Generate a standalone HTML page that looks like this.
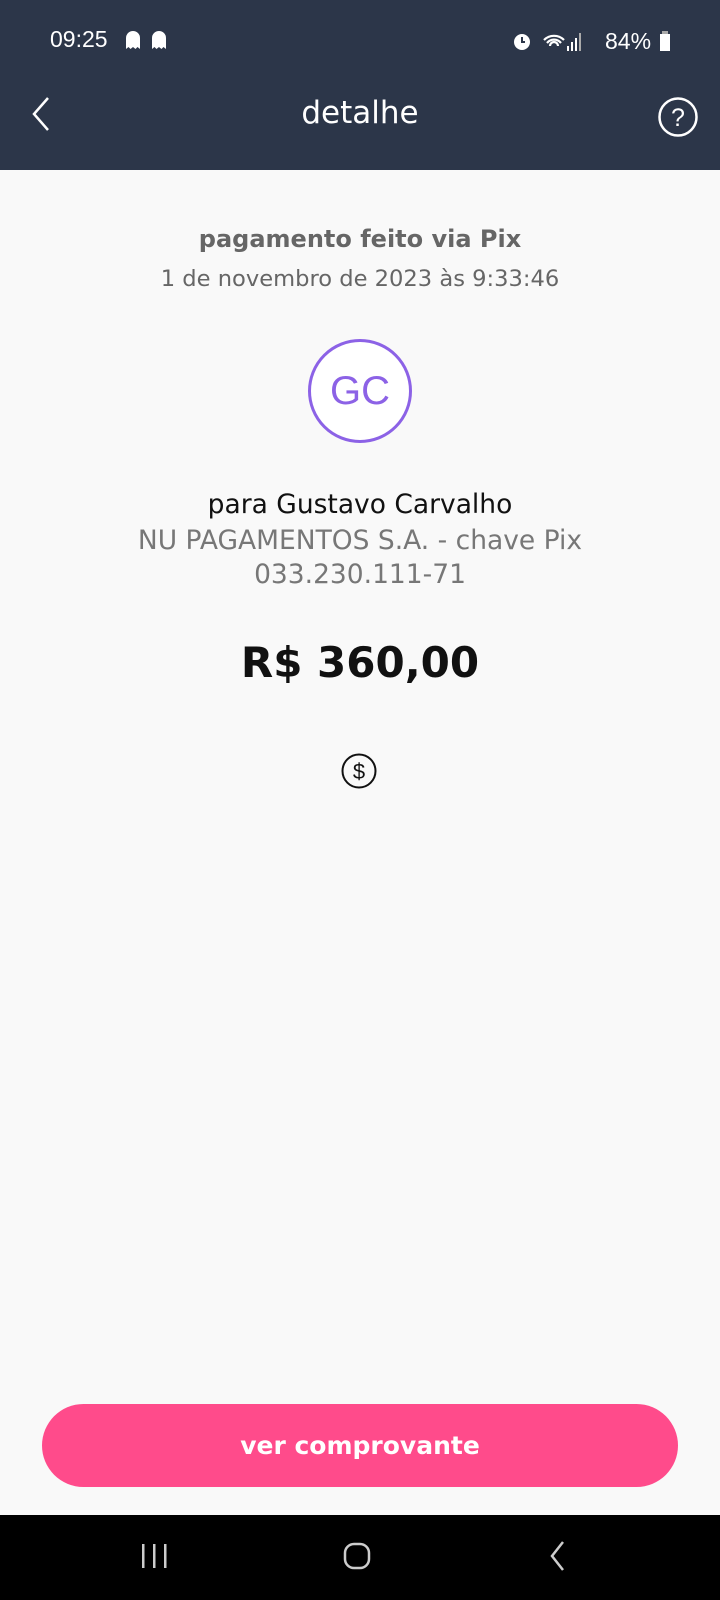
<!DOCTYPE html>
<html><head><meta charset="utf-8"><style>
*{margin:0;padding:0;box-sizing:border-box}
body{width:720px;height:1600px;background:#f9f9f9;font-family:"DejaVu Sans","Liberation Sans",sans-serif;position:relative;overflow:hidden}
.hdr{position:absolute;left:0;top:0;width:720px;height:170px;background:#2c3649;color:#fff}
.abs{position:absolute}
.c{position:absolute;left:0;width:720px;text-align:center;white-space:nowrap}
</style></head><body>
<div class="hdr">
 <div class="abs" style="left:50px;top:26px;font-size:23px;font-family:'Liberation Sans',sans-serif">09:25</div>
 <svg class="abs" style="left:124px;top:29px" width="50" height="24" viewBox="0 0 50 24"><path d="M2 20V9a7 7 0 0 1 14 0v11l-2.5-2-2 2-2.5-2-2.5 2-2-2z" fill="#fff"/><path d="M28 20V9a7 7 0 0 1 14 0v11l-2.5-2-2 2-2.5-2-2.5 2-2-2z" fill="#fff"/></svg>
 <svg class="abs" style="left:510px;top:28px" width="165" height="26" viewBox="0 0 165 26">
  <circle cx="12" cy="14" r="8" fill="#fff"/><path d="M12 9v5h3" stroke="#2c3649" stroke-width="2" fill="none"/>
  <path d="M34 12a14 14 0 0 1 20 0M37 15a9 9 0 0 1 14 0M40 18a4 4 0 0 1 8 0" stroke="#fff" stroke-width="2.2" fill="none"/>
  <rect x="57" y="18" width="2" height="5" fill="#fff"/><rect x="61" y="14" width="2" height="9" fill="#fff"/><rect x="65" y="10" width="2" height="13" fill="#fff"/><rect x="69" y="5" width="2" height="18" fill="#aaa"/>
  <text x="95" y="21" font-size="23" fill="#fff" font-family="Liberation Sans">84%</text>
  <rect x="150" y="6" width="10" height="17" fill="#fff"/><rect x="152" y="3" width="6" height="3" fill="#aaa"/>
 </svg>
 <svg class="abs" style="left:30px;top:96px" width="24" height="36" viewBox="0 0 24 36"><path d="M18 2L4 18l14 16" stroke="#fff" stroke-width="2.5" fill="none"/></svg>
 <div class="c" style="top:95px;font-size:31px">detalhe</div>
 <svg class="abs" style="left:657px;top:96px" width="42" height="42" viewBox="0 0 42 42"><circle cx="21" cy="21" r="18.5" stroke="#fff" stroke-width="2.5" fill="none"/><text x="21" y="30" text-anchor="middle" font-size="25" fill="#fff" font-family="Liberation Sans">?</text></svg>
</div>
<div class="c" style="top:225px;font-size:24px;font-weight:bold;color:#666">pagamento feito via Pix</div>
<div class="c" style="top:266px;font-size:22.6px;color:#666">1 de novembro de 2023 às 9:33:46</div>
<div class="abs" style="left:308px;top:339px;width:104px;height:104px;border:3px solid #8c62e6;border-radius:50%;background:#fff;text-align:center;line-height:98px;font-size:40px;color:#8c62e6;font-family:'Liberation Sans',sans-serif">GC</div>
<div class="c" style="top:489px;font-size:26.5px;color:#111">para Gustavo Carvalho</div>
<div class="c" style="top:525px;font-size:26.5px;color:#777">NU PAGAMENTOS S.A. - chave Pix</div>
<div class="c" style="top:559px;font-size:26.5px;color:#777">033.230.111-71</div>
<div class="c" style="top:638px;font-size:42px;font-weight:bold;color:#111">R$ 360,00</div>
<svg class="abs" style="left:341px;top:753px" width="36" height="36" viewBox="0 0 36 36"><circle cx="18" cy="18" r="16.5" stroke="#111" stroke-width="2" fill="none"/><text x="18" y="26" text-anchor="middle" font-size="22" fill="#111" font-family="Liberation Sans">$</text></svg>
<div class="abs" style="left:42px;top:1404px;width:636px;height:83px;border-radius:42px;background:#ff4b8b;color:#fff;text-align:center;line-height:83px;font-size:25px;font-weight:bold">ver comprovante</div>
<div class="abs" style="left:0;top:1515px;width:720px;height:85px;background:#000">
 <svg class="abs" style="left:140px;top:27px" width="30" height="28"><rect x="2" y="2" width="2.5" height="24" fill="#ccc"/><rect x="13" y="2" width="2.5" height="24" fill="#ccc"/><rect x="24" y="2" width="2.5" height="24" fill="#ccc"/></svg>
 <svg class="abs" style="left:342px;top:26px" width="30" height="30"><rect x="3" y="3" width="24" height="24" rx="9" stroke="#ccc" stroke-width="2.5" fill="none"/></svg>
 <svg class="abs" style="left:548px;top:24px" width="20" height="34"><path d="M15 3L4 17l11 14" stroke="#ccc" stroke-width="2.5" fill="none"/></svg>
</div>
</body></html>
